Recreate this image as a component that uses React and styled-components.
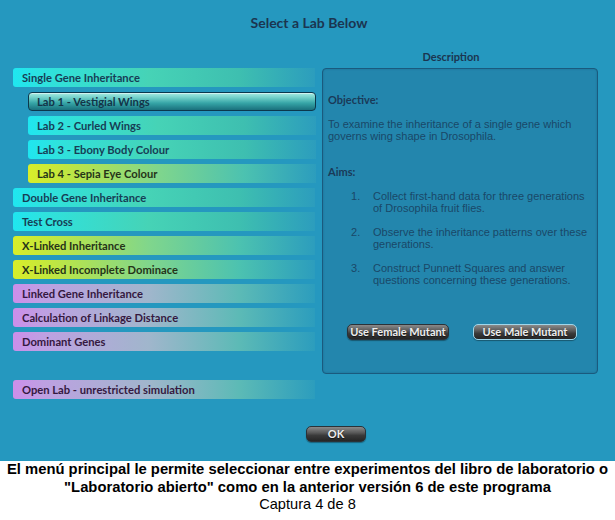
import React from 'react';
import styled, { createGlobalStyle, css } from 'styled-components';

const GlobalStyle = createGlobalStyle`
  html, body {
    margin: 0;
    padding: 0;
    background: #ffffff;
  }
  * {
    box-sizing: border-box;
  }
`;

const labs = [
  { label: 'Single Gene Inheritance', tone: 'cyan' },
  { label: 'Lab 1 - Vestigial Wings', tone: 'cyan', sub: true, selected: true },
  { label: 'Lab 2 - Curled Wings', tone: 'cyan', sub: true },
  { label: 'Lab 3 - Ebony Body Colour', tone: 'cyan', sub: true },
  { label: 'Lab 4 - Sepia Eye Colour', tone: 'yellow', sub: true },
  { label: 'Double Gene Inheritance', tone: 'cyan' },
  { label: 'Test Cross', tone: 'cyan' },
  { label: 'X-Linked Inheritance', tone: 'yellow' },
  { label: 'X-Linked Incomplete Dominace', tone: 'yellow' },
  { label: 'Linked Gene Inheritance', tone: 'purple' },
  { label: 'Calculation of Linkage Distance', tone: 'purple' },
  { label: 'Dominant Genes', tone: 'purple' },
];

const aims = [
  'Collect first-hand data for three generations of Drosophila fruit flies.',
  'Observe the inheritance patterns over these generations.',
  'Construct Punnett Squares and answer questions concerning these generations.',
];

const App = () => {
  return (
    <>
      <GlobalStyle />
      <StyledScreen>
        <StyledTitle>Select a Lab Below</StyledTitle>

        <StyledMain>
          <StyledList>
            {labs.map((lab) => (
              <StyledLabRow
                key={lab.label}
                $tone={lab.tone}
                $sub={lab.sub}
                $selected={lab.selected}
              >
                {lab.label}
              </StyledLabRow>
            ))}
            <StyledSpacer />
            <StyledLabRow $tone="purple">Open Lab - unrestricted simulation</StyledLabRow>
          </StyledList>

          <StyledSide>
            <StyledSideHeader>Description</StyledSideHeader>
            <StyledPanel>
              <StyledHeading>Objective:</StyledHeading>
              <StyledBody>
                To examine the inheritance of a single gene which governs wing shape in Drosophila.
              </StyledBody>
              <StyledHeading $gap="23px">Aims:</StyledHeading>
              <StyledAims>
                {aims.map((aim, i) => (
                  <StyledAim key={i}>
                    <span>{i + 1}.</span>
                    <span>{aim}</span>
                  </StyledAim>
                ))}
              </StyledAims>
              <StyledButtons>
                <StyledDarkButton $width="102px">Use Female Mutant</StyledDarkButton>
                <StyledDarkButton $width="104px" $focused>
                  Use Male Mutant
                </StyledDarkButton>
              </StyledButtons>
            </StyledPanel>
          </StyledSide>
        </StyledMain>

        <StyledFooter>
          <StyledDarkButton $width="60px">OK</StyledDarkButton>
        </StyledFooter>
      </StyledScreen>

      <StyledCaption>
        <StyledCaptionBold>
          El menú principal le permite seleccionar entre experimentos del libro de laboratorio o
          <br />
          "Laboratorio abierto" como en la anterior versión 6 de este programa
        </StyledCaptionBold>
        <StyledCaptionSmall>Captura 4 de 8</StyledCaptionSmall>
      </StyledCaption>
    </>
  );
};

// =================== ESTILOS CSS ===================
const uiFont = `Lato, "Open Sans", sans-serif`;

const tones = {
  cyan: {
    bg: 'linear-gradient(to right, #1fe6f0 0%, #2ee2de 10%, #46d3b6 45%, #3ebfb0 75%, #2c9dbd 100%)',
    color: '#173d55',
  },
  yellow: {
    bg: 'linear-gradient(to right, #d8ee2a 0%, #c6e83a 10%, #80d68c 45%, #4cc2b0 75%, #2c9dbd 100%)',
    color: '#253318',
  },
  purple: {
    bg: 'linear-gradient(to right, #cc8eea 0%, #bea0e2 10%, #a0b6cc 45%, #5cbab6 75%, #2c9dbd 100%)',
    color: '#35183f',
  },
};

const StyledScreen = styled.div`
  display: flex;
  flex-direction: column;
  width: 615px;
  height: 461px;
  background-color: #2598bf;
  font-family: ${uiFont};
`;

const StyledTitle = styled.h1`
  margin: 0;
  height: 46px;
  padding-top: 15px;
  padding-left: 3px;
  text-align: center;
  font-size: 14px;
  font-weight: 700;
  line-height: 16px;
  color: #1b3550;
`;

const StyledMain = styled.div`
  display: grid;
  grid-template-columns: 302px 276px;
  column-gap: 7px;
  padding-left: 13px;
`;

const StyledList = styled.div`
  display: flex;
  flex-direction: column;
  gap: 5px;
  padding-top: 22px;
`;

const StyledSpacer = styled.div`
  height: 19px;
`;

const StyledLabRow = styled.div`
  height: 19px;
  margin-left: ${(p) => (p.$sub ? '15px' : '0')};
  margin-right: ${(p) => (p.$sub ? '-1px' : '0')};
  padding-left: 9px;
  display: flex;
  align-items: center;
  border-radius: 3px 0 0 3px;
  background: ${(p) => tones[p.$tone].bg};
  color: ${(p) => tones[p.$tone].color};
  font-size: 11.2px;
  font-weight: 700;
  white-space: nowrap;

  ${(p) =>
    p.$selected &&
    css`
      border: 1px solid #0c384c;
      border-radius: 4px;
      padding-left: 8px;
      background: linear-gradient(
        to bottom,
        #a6ece4 0%,
        #6ccdc6 30%,
        #35a4a6 60%,
        #1a707c 100%
      );
      box-shadow: inset 0 1px 0 rgba(255, 255, 255, 0.5);
      color: #133448;
    `}
`;

const StyledSide = styled.div`
  display: flex;
  flex-direction: column;
`;

const StyledSideHeader = styled.div`
  height: 22px;
  padding-top: 4px;
  padding-right: 18px;
  text-align: center;
  font-size: 11px;
  font-weight: 700;
  color: #1b3550;
`;

const StyledPanel = styled.div`
  height: 306px;
  padding: 24px 4px 0 5px;
  border: 1px solid #1a5a7e;
  border-radius: 4px;
  background-color: #2386ad;
  box-shadow: inset 0 0 2px rgba(10, 40, 70, 0.3);
`;

const StyledHeading = styled.div`
  margin-top: ${(p) => p.$gap || '0'};
  font-size: 11px;
  font-weight: 700;
  line-height: 14px;
  color: #1a3a58;
`;

const StyledBody = styled.p`
  margin: 12px 0 0;
  font-family: 'Liberation Sans', Arial, sans-serif;
  font-size: 11px;
  line-height: 11.5px;
  color: #1a4868;
`;

const StyledAims = styled.ol`
  list-style: none;
  margin: 11px 0 0;
  padding: 0;
  display: flex;
  flex-direction: column;
  gap: 12px;
`;

const StyledAim = styled.li`
  display: grid;
  grid-template-columns: 22px 1fr;
  padding-left: 23px;
  font-family: 'Liberation Sans', Arial, sans-serif;
  font-size: 11px;
  line-height: 12px;
  color: #1a4868;
`;

const StyledButtons = styled.div`
  display: flex;
  gap: 24px;
  margin-top: 38px;
  padding-left: 19px;
`;

const StyledDarkButton = styled.button`
  width: ${(p) => p.$width};
  height: 16px;
  padding: 0;
  border: 1px solid ${(p) => (p.$focused ? '#9ed6ea' : '#2a3238')};
  border-radius: 5px;
  background: linear-gradient(to bottom, #8a8a8a 0%, #5a5a5a 40%, #3a3a3a 60%, #262626 100%);
  box-shadow: 0 1px 1px rgba(0, 0, 0, 0.35);
  color: #eeeeee;
  font-family: ${uiFont};
  font-size: 11px;
  font-weight: 700;
  line-height: 14px;
  text-shadow: 0 1px 1px rgba(0, 0, 0, 0.6);
  white-space: nowrap;
`;

const StyledFooter = styled.div`
  display: flex;
  margin-top: auto;
  padding: 0 0 19px 306px;
`;

const StyledCaption = styled.div`
  width: 615px;
  text-align: center;
  font-family: 'Liberation Sans', Arial, sans-serif;
  color: #000000;
`;

const StyledCaptionBold = styled.div`
  font-size: 14.8px;
  font-weight: 700;
  line-height: 17.5px;
`;

const StyledCaptionSmall = styled.div`
  font-size: 14.6px;
  line-height: 17px;
`;

export default App;
